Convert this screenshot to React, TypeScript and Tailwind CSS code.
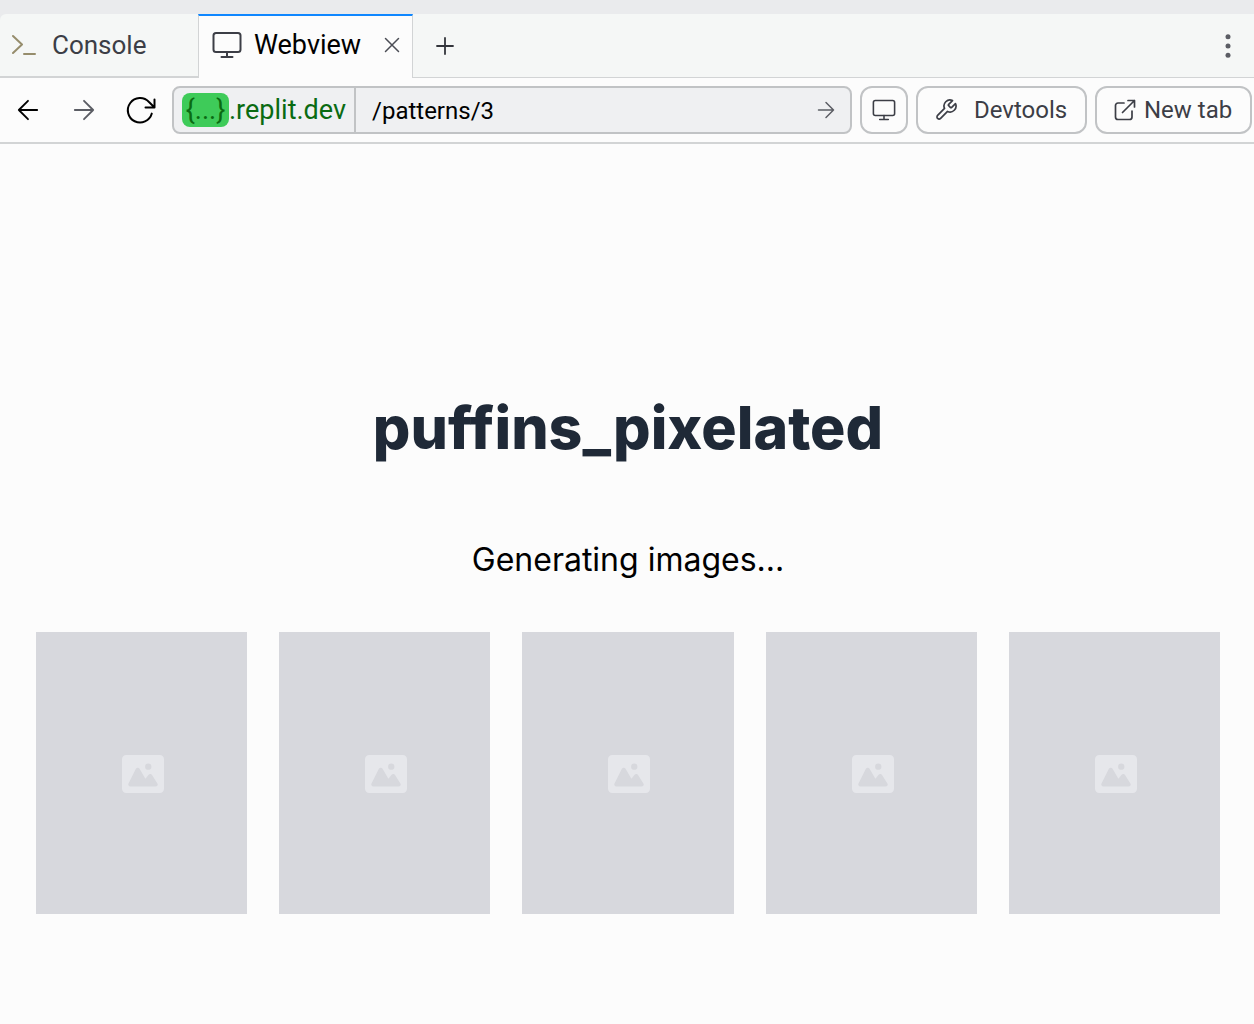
import type { ReactNode, SVGProps } from "react";

function Icon({ children, ...rest }: SVGProps<SVGSVGElement> & { children: ReactNode }) {
  return (
    <svg fill="none" stroke="currentColor" aria-hidden="true" {...rest}>
      {children}
    </svg>
  );
}

function Monitor({ className }: { className: string }) {
  return (
    <Icon viewBox="0 0 30 28" strokeWidth="2" strokeLinecap="round" className={className}>
      <rect x="1.5" y="2" width="27" height="19" rx="2.5" />
      <path d="M15 21v5M9.500 26h11" />
    </Icon>
  );
}

function Arrow({ className, flip = false }: { className: string; flip?: boolean }) {
  return (
    <Icon viewBox="0 0 24 24" strokeWidth="2" strokeLinecap="round" strokeLinejoin="round" className={className}>
      {flip ? <path d="M22 12H2M12 2 2 12l10 10" /> : <path d="M2 12h20M12 2l10 10-10 10" />}
    </Icon>
  );
}

function TabBar() {
  return (
    <div className="flex h-16 items-stretch rounded-tl-md bg-[#f5f7f6] text-[26px] leading-8">
      <button type="button" className="flex w-[198px] items-center border-b-2 border-[#d2d4d5] pl-3 text-[#3c3e46]">
        <Icon viewBox="0 0 24 24" strokeWidth="2" strokeLinecap="round" strokeLinejoin="round" className="mr-4 size-6 text-[#968d6c]">
          <path d="M1 3l9 8.500-9 8.500M12 21h11" />
        </Icon>
        Console
      </button>
      <div className="flex w-[215px] items-center border-x border-t-2 border-x-[#d2d4d5] border-t-[#0f87ff] bg-[#fcfcfc] pr-2 pb-1 pl-[13px] text-[27px]">
        <button type="button" className="flex flex-1 items-center gap-3 text-black">
          <Monitor className="h-7 w-[30px] text-[#3c3e46]" />
          Webview
        </button>
        <button type="button" aria-label="Close tab" className="flex size-6 items-center justify-center text-[#4b4d55]">
          <Icon viewBox="0 0 16 16" strokeWidth="1.5" strokeLinecap="round" className="size-4">
            <path d="M1.500 1.500l13 13M14.500 1.500l-13 13" />
          </Icon>
        </button>
      </div>
      <div className="flex flex-1 items-center justify-between border-b border-[#d2d4d5] pl-5">
        <button type="button" aria-label="Add tab" className="flex size-6 items-center justify-center text-[#33353b]">
          <Icon viewBox="0 0 18 18" strokeWidth="1.800" strokeLinecap="round" className="size-[18px]">
            <path d="M9 1v16M1 9h16" />
          </Icon>
        </button>
        <button type="button" aria-label="Tab options" className="flex h-12 w-[52px] items-center justify-center text-[#5b5d64]">
          <svg viewBox="0 0 6 24" fill="currentColor" className="h-6 w-1.5" aria-hidden="true">
            <circle cx="3" cy="2.700" r="2.500" />
            <circle cx="3" cy="12" r="2.500" />
            <circle cx="3" cy="21.300" r="2.500" />
          </svg>
        </button>
      </div>
    </div>
  );
}

function Toolbar() {
  const navButton = "flex h-12 w-14 items-center justify-center";
  const actionButton = "flex h-12 items-center rounded-xl border-2 border-[#c1c3c5] bg-[#fcfcfc] text-[#3c3e46]";
  return (
    <div className="flex items-center border-b-2 border-[#d2d4d5] py-2 pr-0.5 text-2xl">
      <button type="button" aria-label="Back" className={navButton}>
        <Arrow flip className="size-[22px] text-black" />
      </button>
      <button type="button" aria-label="Forward" className={navButton}>
        <Arrow className="size-[22px] text-[#5b5d64]" />
      </button>
      <button type="button" aria-label="Reload" className={navButton}>
        <Icon viewBox="0 0 32 32" strokeWidth="2" strokeLinecap="round" strokeLinejoin="round" className="size-8 text-black">
          <path d="M27.800 19.600A12.200 12.200 0 1 1 25 8L29.500 12.500M30.500 5.500v8H21.500" />
        </Icon>
      </button>
      <div className="ml-1 flex h-12 min-w-0 flex-1 items-stretch overflow-hidden rounded-lg border-2 border-[#c1c3c5] bg-[#eff0f2]">
        <div className="flex w-[182px] shrink-0 items-center border-r-2 border-[#c1c3c5] pl-2 text-[27px] leading-8 text-[#0a6b12]">
          <span className="flex h-[34px] w-[47px] items-center justify-center rounded-lg bg-[#3ecb59]">{"{...}"}</span>
          <span>.replit.dev</span>
        </div>
        <input aria-label="Path" defaultValue="/patterns/3" className="min-w-0 flex-1 bg-transparent pt-0.5 pl-4 text-black outline-none" />
        <button type="button" aria-label="Go" className="flex w-12 items-center justify-center text-[#5b5d64]">
          <Arrow className="size-[18px]" />
        </button>
      </div>
      <div className="ml-2 flex shrink-0 gap-2">
        <button type="button" aria-label="Device size" className={actionButton + " w-12 justify-center"}>
          <Monitor className="h-[22px] w-6" />
        </button>
        <button type="button" className={actionButton + " w-[171px] gap-4 pl-4"}>
          <Icon viewBox="0 0 24 24" strokeWidth="1.700" strokeLinejoin="round" className="size-6">
            <path d="M14.700 6.300a1 1 0 0 0 0 1.400l1.600 1.600a1 1 0 0 0 1.400 0l3.770-3.770a6 6 0 0 1-7.940 7.940l-6.910 6.910a2.120 2.120 0 0 1-3-3l6.910-6.910a6 6 0 0 1 7.940-7.940l-3.760 3.760z" />
          </Icon>
          Devtools
        </button>
        <button type="button" className={actionButton + " w-[157px] gap-2 pl-[17px]"}>
          <Icon viewBox="0 0 22 22" strokeWidth="1.700" strokeLinecap="round" strokeLinejoin="round" className="size-[22px]">
            <path d="M10 4H4a2.500 2.500 0 0 0-2.500 2.500v11.500a2.500 2.500 0 0 0 2.500 2.500h11.500a2.500 2.500 0 0 0 2.500-2.500V12M8.500 13.500 20.500 1.500M14 1.500h6.500V8" />
          </Icon>
          New tab
        </button>
      </div>
    </div>
  );
}

function ImagePlaceholder() {
  return (
    <li className="flex aspect-[3/4] items-center justify-center bg-[#d7d8dd] pt-0.5 pl-[3px]">
      <svg viewBox="0 0 20 18" fill="currentColor" className="h-[38px] w-[42px] text-[#e6e7eb]" aria-hidden="true">
        <path d="M18 0H2a2 2 0 0 0-2 2v14a2 2 0 0 0 2 2h16a2 2 0 0 0 2-2V2a2 2 0 0 0-2-2Zm-5.500 4a1.500 1.500 0 1 1 0 3 1.500 1.500 0 0 1 0-3Zm4.376 10.481A1 1 0 0 1 16 15H4a1 1 0 0 1-.895-1.447l3.500-7A1 1 0 0 1 7.468 6a.965.965 0 0 1 .9.5l2.775 4.757 1.546-1.887a1 1 0 0 1 1.618.1l2.541 4a1 1 0 0 1 .028 1.011Z" />
      </svg>
    </li>
  );
}

export default function App() {
  return (
    <div className="min-h-screen bg-[#fcfcfc] font-[Roboto,sans-serif]">
      <header className="bg-[#eaebed] pt-3.5">
        <TabBar />
        <div className="bg-[#fcfcfc]">
          <Toolbar />
        </div>
      </header>
      <main className="pt-[254px] pr-[34px] pb-24 pl-9 text-center font-[Inter,sans-serif]">
        <h1 className="text-[59px] leading-[60px] font-extrabold text-[#1f2937]">puffins_pixelated</h1>
        <p className="mt-[82px] text-[32px] leading-10 text-black">Generating images...</p>
        <ul className="mt-[52px] grid grid-cols-5 gap-8">
          {[0, 1, 2, 3, 4].map((i) => (
            <ImagePlaceholder key={i} />
          ))}
        </ul>
      </main>
    </div>
  );
}
